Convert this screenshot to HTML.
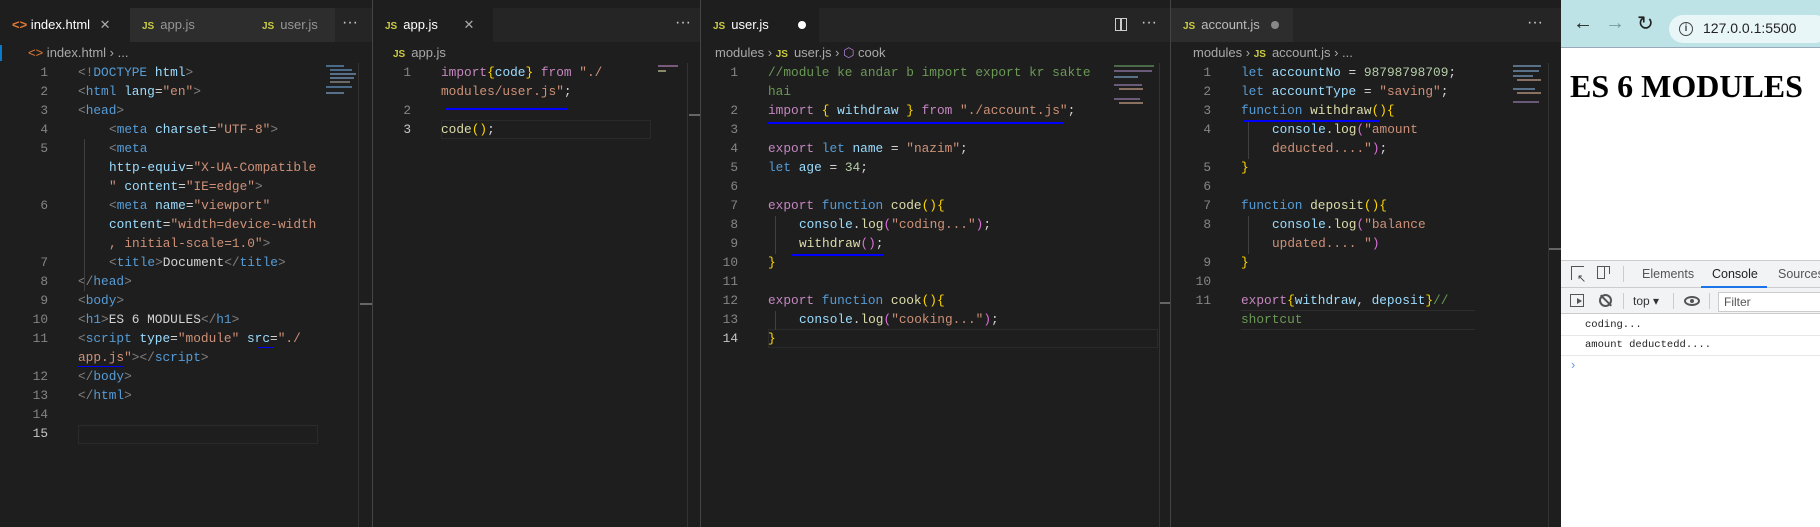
<!DOCTYPE html>
<html><head><meta charset="utf-8"><style>
*{margin:0;padding:0;box-sizing:border-box}
body{width:1820px;height:527px;background:#1e1e1e;position:relative;overflow:hidden;font-family:"Liberation Sans",sans-serif}
.abs{position:absolute}
.pane{position:absolute;top:0;height:527px;background:#1e1e1e;border-left:1px solid #444;overflow:hidden}
.tabs{position:absolute;left:0;right:0;top:8px;height:34px;background:#252526}
.tab{position:absolute;top:0;height:34px;background:#2d2d2d;color:#969696;font-size:13px;line-height:34px;padding-left:12px;white-space:nowrap}
.tab.act{background:#1e1e1e;color:#fff}
.js{color:#cbcb41;font-weight:bold;font-size:10px;margin-right:6px}
.crumb{position:absolute;top:43px;height:20px;color:#a9a9a9;font-size:13px;line-height:20px;white-space:nowrap}
.code{position:absolute;top:63px;font-family:"Liberation Mono",monospace;font-size:12.8px;line-height:19px;color:#d4d4d4}
.row{height:19px;position:relative}
.n{position:absolute;text-align:right;width:30px;color:#858585}
.c{position:absolute;white-space:pre}
.t{color:#808080}.tg{color:#569cd6}.at{color:#9cdcfe}.s{color:#ce9178}.k{color:#c586c0}.f{color:#dcdcaa}.b{color:#ffd700}.cm{color:#6a9955}.nu{color:#b5cea8}.p{color:#da70d6}
.ul{position:absolute;height:2px;background:#0000ff}
.mm{position:absolute;height:2px}
.dots{position:absolute;top:8px;height:34px;line-height:30px;color:#ccc;font-size:16px}
</style></head><body>
<div class="abs" style="left:0;top:0;width:1561px;height:8px;background:#333"></div>

<!-- PANE 1 -->
<div class="pane" style="left:0;width:373px;border-left:none">
 <div class="tabs">
  <div class="tab act" style="left:0;width:130px"><span style="color:#e37933;font-weight:bold">&lt;&gt;</span> index.html <span style="color:#aaa;margin-left:6px">✕</span></div>
  <div class="tab" style="left:130px;width:120px"><span class="js">JS</span>app.js</div>
  <div class="tab" style="left:250px;width:85px"><span class="js">JS</span>user.js</div>
 </div>
 <div class="dots" style="left:342px">···</div>
 <div class="crumb" style="left:28px"><span style="color:#e37933">&lt;&gt;</span> index.html › ...</div>
 <div class="abs" style="left:0;top:45px;width:2px;height:16px;background:#0a7acc"></div>
 <div class="abs" style="left:78px;top:425px;width:240px;height:19px;border:1px solid #2a2a2a"></div>
 <div class="code" style="left:18px"><div class="row"><span class="n">1</span><span class="c" style="left:60px"><span class="t">&lt;!</span><span class="tg">DOCTYPE</span> <span class="at">html</span><span class="t">&gt;</span></span></div><div class="row"><span class="n">2</span><span class="c" style="left:60px"><span class="t">&lt;</span><span class="tg">html</span> <span class="at">lang</span>=<span class="s">"en"</span><span class="t">&gt;</span></span></div><div class="row"><span class="n">3</span><span class="c" style="left:60px"><span class="t">&lt;</span><span class="tg">head</span><span class="t">&gt;</span></span></div><div class="row"><span class="n">4</span><span class="c" style="left:91px"><span class="t">&lt;</span><span class="tg">meta</span> <span class="at">charset</span>=<span class="s">"UTF-8"</span><span class="t">&gt;</span></span></div><div class="row"><span class="n">5</span><span class="c" style="left:91px"><span class="t">&lt;</span><span class="tg">meta</span></span></div><div class="row"><span class="c" style="left:91px"><span class="at">http-equiv</span>=<span class="s">"X-UA-Compatible</span></span></div><div class="row"><span class="c" style="left:91px"><span class="s">"</span> <span class="at">content</span>=<span class="s">"IE=edge"</span><span class="t">&gt;</span></span></div><div class="row"><span class="n">6</span><span class="c" style="left:91px"><span class="t">&lt;</span><span class="tg">meta</span> <span class="at">name</span>=<span class="s">"viewport"</span></span></div><div class="row"><span class="c" style="left:91px"><span class="at">content</span>=<span class="s">"width=device-width</span></span></div><div class="row"><span class="c" style="left:91px"><span class="s">, initial-scale=1.0"</span><span class="t">&gt;</span></span></div><div class="row"><span class="n">7</span><span class="c" style="left:91px"><span class="t">&lt;</span><span class="tg">title</span><span class="t">&gt;</span>Document<span class="t">&lt;/</span><span class="tg">title</span><span class="t">&gt;</span></span></div><div class="row"><span class="n">8</span><span class="c" style="left:60px"><span class="t">&lt;/</span><span class="tg">head</span><span class="t">&gt;</span></span></div><div class="row"><span class="n">9</span><span class="c" style="left:60px"><span class="t">&lt;</span><span class="tg">body</span><span class="t">&gt;</span></span></div><div class="row"><span class="n">10</span><span class="c" style="left:60px"><span class="t">&lt;</span><span class="tg">h1</span><span class="t">&gt;</span>ES 6 MODULES<span class="t">&lt;/</span><span class="tg">h1</span><span class="t">&gt;</span></span></div><div class="row"><span class="n">11</span><span class="c" style="left:60px"><span class="t">&lt;</span><span class="tg">script</span> <span class="at">type</span>=<span class="s">"module"</span> <span class="at">src</span>=<span class="s">"./</span></span></div><div class="row"><span class="c" style="left:60px"><span class="s">app.js"</span><span class="t">&gt;&lt;/</span><span class="tg">script</span><span class="t">&gt;</span></span></div><div class="row"><span class="n">12</span><span class="c" style="left:60px"><span class="t">&lt;/</span><span class="tg">body</span><span class="t">&gt;</span></span></div><div class="row"><span class="n">13</span><span class="c" style="left:60px"><span class="t">&lt;/</span><span class="tg">html</span><span class="t">&gt;</span></span></div><div class="row"><span class="n">14</span></div><div class="row"><span class="n" style="color:#c6c6c6">15</span></div></div>
 <div class="abs" style="left:84px;top:139px;width:1px;height:152px;background:#404040"></div>
 <div class="ul" style="left:258px;top:347px;width:16px;height:1px"></div>
 <div class="ul" style="left:78px;top:366px;width:46px;height:1px"></div>
 <div class="mm" style="left:326px;top:65px;width:18px;background:#4a6a8a"></div>
 <div class="mm" style="left:330px;top:69px;width:22px;background:#4a6a8a"></div>
 <div class="mm" style="left:330px;top:73px;width:26px;background:#587088"></div>
 <div class="mm" style="left:330px;top:77px;width:24px;background:#587088"></div>
 <div class="mm" style="left:330px;top:81px;width:20px;background:#6a6a6a"></div>
 <div class="mm" style="left:326px;top:86px;width:26px;background:#4a6a8a"></div>
 <div class="mm" style="left:326px;top:92px;width:18px;background:#587088"></div>
 <div class="abs" style="left:358px;top:63px;width:1px;height:464px;background:#333"></div>
 <div class="abs" style="left:360px;top:303px;width:12px;height:2px;background:#666"></div>
</div>

<!-- PANE 2 -->
<div class="pane" style="left:372px;width:329px">
 <div class="tabs">
  <div class="tab act" style="left:0;width:120px"><span class="js">JS</span>app.js <span style="color:#aaa;margin-left:22px">✕</span></div>
 </div>
 <div class="dots" style="left:302px">···</div>
 <div class="crumb" style="left:20px"><span class="js">JS</span>app.js</div>
 <div class="abs" style="left:68px;top:120px;width:210px;height:19px;border:1px solid #2a2a2a"></div>
 <div class="code" style="left:8px"><div class="row"><span class="n">1</span><span class="c" style="left:60px"><span class="k">import</span><span class="b">{</span><span class="at">code</span><span class="b">}</span> <span class="k">from</span> <span class="s">"./</span></span></div><div class="row"><span class="c" style="left:60px"><span class="s">modules/user.js"</span>;</span></div><div class="row"><span class="n">2</span></div><div class="row"><span class="n" style="color:#c6c6c6">3</span><span class="c" style="left:60px"><span class="f">code</span><span class="b">()</span>;</span></div></div>
 <div class="ul" style="left:73px;top:108px;width:122px"></div>
 <div class="mm" style="left:285px;top:65px;width:20px;background:#7a5a7a"></div>
 <div class="mm" style="left:285px;top:70px;width:8px;background:#8a8a6a"></div>
 <div class="abs" style="left:314px;top:63px;width:1px;height:464px;background:#333"></div>
 <div class="abs" style="left:316px;top:114px;width:13px;height:2px;background:#666"></div>
</div>

<!-- PANE 3 -->
<div class="pane" style="left:700px;width:471px">
 <div class="tabs">
  <div class="tab act" style="left:0;width:118px"><span class="js">JS</span>user.js <span style="display:inline-block;width:8px;height:8px;border-radius:50%;background:#fff;margin-left:26px"></span></div>
 </div>
 <div class="abs" style="left:414px;top:18px;width:12px;height:13px;border:1.5px solid #ccc"></div>
 <div class="abs" style="left:419px;top:18px;width:1.5px;height:13px;background:#ccc"></div>
 <div class="dots" style="left:440px">···</div>
 <div class="crumb" style="left:14px">modules › <span class="js">JS</span>user.js › <span style="color:#b180d7">⬡</span> cook</div>
 <div class="abs" style="left:67px;top:329px;width:390px;height:19px;border:1px solid #2a2a2a"></div>
 <div class="code" style="left:7px"><div class="row"><span class="n">1</span><span class="c" style="left:60px"><span class="cm">//module ke andar b import export kr sakte</span></span></div><div class="row"><span class="c" style="left:60px"><span class="cm">hai</span></span></div><div class="row"><span class="n">2</span><span class="c" style="left:60px"><span class="k">import</span> <span class="b">{</span> <span class="at">withdraw</span> <span class="b">}</span> <span class="k">from</span> <span class="s">"./account.js"</span>;</span></div><div class="row"><span class="n">3</span></div><div class="row"><span class="n">4</span><span class="c" style="left:60px"><span class="k">export</span> <span class="tg">let</span> <span class="at">name</span> = <span class="s">"nazim"</span>;</span></div><div class="row"><span class="n">5</span><span class="c" style="left:60px"><span class="tg">let</span> <span class="at">age</span> = <span class="nu">34</span>;</span></div><div class="row"><span class="n">6</span></div><div class="row"><span class="n">7</span><span class="c" style="left:60px"><span class="k">export</span> <span class="tg">function</span> <span class="f">code</span><span class="b">(){</span></span></div><div class="row"><span class="n">8</span><span class="c" style="left:91px"><span class="at">console</span>.<span class="f">log</span><span class="p">(</span><span class="s">"coding..."</span><span class="p">)</span>;</span></div><div class="row"><span class="n">9</span><span class="c" style="left:91px"><span class="f">withdraw</span><span class="p">()</span>;</span></div><div class="row"><span class="n">10</span><span class="c" style="left:60px"><span class="b">}</span></span></div><div class="row"><span class="n">11</span></div><div class="row"><span class="n">12</span><span class="c" style="left:60px"><span class="k">export</span> <span class="tg">function</span> <span class="f">cook</span><span class="b">(){</span></span></div><div class="row"><span class="n">13</span><span class="c" style="left:91px"><span class="at">console</span>.<span class="f">log</span><span class="p">(</span><span class="s">"cooking..."</span><span class="p">)</span>;</span></div><div class="row"><span class="n" style="color:#c6c6c6">14</span><span class="c" style="left:60px"><span class="b">}</span></span></div></div>
 <div class="abs" style="left:74px;top:216px;width:1px;height:38px;background:#404040"></div>
 <div class="abs" style="left:74px;top:311px;width:1px;height:19px;background:#404040"></div>
 <div class="ul" style="left:66px;top:122px;width:296px"></div>
 <div class="ul" style="left:91px;top:254px;width:92px"></div>
 <div class="mm" style="left:413px;top:65px;width:40px;background:#4a6a4a"></div>
 <div class="mm" style="left:413px;top:70px;width:38px;background:#6a5a7a"></div>
 <div class="mm" style="left:413px;top:76px;width:24px;background:#587088"></div>
 <div class="mm" style="left:413px;top:84px;width:28px;background:#6a5a7a"></div>
 <div class="mm" style="left:418px;top:88px;width:24px;background:#8a7060"></div>
 <div class="mm" style="left:413px;top:98px;width:26px;background:#6a5a7a"></div>
 <div class="mm" style="left:418px;top:102px;width:24px;background:#8a7060"></div>
 <div class="abs" style="left:458px;top:63px;width:1px;height:464px;background:#333"></div>
 <div class="abs" style="left:459px;top:302px;width:12px;height:2px;background:#666"></div>
</div>

<!-- PANE 4 -->
<div class="pane" style="left:1170px;width:391px">
 <div class="tabs">
  <div class="tab" style="left:0;width:122px;color:#bbb"><span class="js">JS</span>account.js <span style="display:inline-block;width:8px;height:8px;border-radius:50%;background:#888;margin-left:8px"></span></div>
 </div>
 <div class="dots" style="left:356px">···</div>
 <div class="crumb" style="left:22px">modules › <span class="js">JS</span>account.js › ...</div>
 <div class="abs" style="left:70px;top:310px;width:234px;height:20px;border-top:1px solid #2e2e2e;border-bottom:1px solid #2e2e2e"></div>
 <div class="code" style="left:10px"><div class="row"><span class="n">1</span><span class="c" style="left:60px"><span class="tg">let</span> <span class="at">accountNo</span> = <span class="nu">98798798709</span>;</span></div><div class="row"><span class="n">2</span><span class="c" style="left:60px"><span class="tg">let</span> <span class="at">accountType</span> = <span class="s">"saving"</span>;</span></div><div class="row"><span class="n">3</span><span class="c" style="left:60px"><span class="tg">function</span> <span class="f">withdraw</span><span class="b">(){</span></span></div><div class="row"><span class="n">4</span><span class="c" style="left:91px"><span class="at">console</span>.<span class="f">log</span><span class="p">(</span><span class="s">"amount</span></span></div><div class="row"><span class="c" style="left:91px"><span class="s">deducted...."</span><span class="p">)</span>;</span></div><div class="row"><span class="n">5</span><span class="c" style="left:60px"><span class="b">}</span></span></div><div class="row"><span class="n">6</span></div><div class="row"><span class="n">7</span><span class="c" style="left:60px"><span class="tg">function</span> <span class="f">deposit</span><span class="b">(){</span></span></div><div class="row"><span class="n">8</span><span class="c" style="left:91px"><span class="at">console</span>.<span class="f">log</span><span class="p">(</span><span class="s">"balance</span></span></div><div class="row"><span class="c" style="left:91px"><span class="s">updated.... "</span><span class="p">)</span></span></div><div class="row"><span class="n">9</span><span class="c" style="left:60px"><span class="b">}</span></span></div><div class="row"><span class="n">10</span></div><div class="row"><span class="n">11</span><span class="c" style="left:60px"><span class="k">export</span><span class="b">{</span><span class="at">withdraw</span>, <span class="at">deposit</span><span class="b">}</span><span class="cm">//</span></span></div><div class="row"><span class="c" style="left:60px"><span class="cm">shortcut</span></span></div></div>
 <div class="abs" style="left:77px;top:121px;width:1px;height:38px;background:#404040"></div>
 <div class="abs" style="left:77px;top:216px;width:1px;height:38px;background:#404040"></div>
 <div class="ul" style="left:72px;top:120px;width:136px"></div>
 <div class="mm" style="left:342px;top:65px;width:28px;background:#587088"></div>
 <div class="mm" style="left:342px;top:70px;width:26px;background:#587088"></div>
 <div class="mm" style="left:342px;top:75px;width:20px;background:#587088"></div>
 <div class="mm" style="left:346px;top:79px;width:24px;background:#8a7060"></div>
 <div class="mm" style="left:342px;top:88px;width:22px;background:#587088"></div>
 <div class="mm" style="left:346px;top:92px;width:24px;background:#8a7060"></div>
 <div class="mm" style="left:342px;top:101px;width:26px;background:#6a5a7a"></div>
 <div class="abs" style="left:377px;top:63px;width:1px;height:464px;background:#333"></div>
 <div class="abs" style="left:378px;top:248px;width:13px;height:2px;background:#666"></div>
</div>

<!-- BROWSER -->
<div class="abs" style="left:1561px;top:0;width:259px;height:527px;background:#fff;font-family:'Liberation Sans',sans-serif">
 <div class="abs" style="left:0;top:0;width:259px;height:48px;background:#bde3e6;border-bottom:1px solid #9ab"></div>
 <div class="abs" style="left:12px;top:12px;font-size:20px;color:#222">←</div>
 <div class="abs" style="left:44px;top:12px;font-size:20px;color:#7a9a9c">→</div>
 <div class="abs" style="left:76px;top:11px;font-size:20px;color:#222">↻</div>
 <div class="abs" style="left:108px;top:15px;width:160px;height:28px;border-radius:14px;background:#e9f6f7"></div>
 <div class="abs" style="left:118px;top:22px;width:14px;height:14px;border:1.5px solid #444;border-radius:50%;font-size:10px;line-height:11px;text-align:center;color:#444;font-weight:bold">i</div>
 <div class="abs" style="left:142px;top:20px;font-size:14px;color:#222">127.0.0.1:5500</div>
 <div class="abs" style="left:9px;top:68px;font-family:'Liberation Serif',serif;font-weight:bold;font-size:32px;color:#000;white-space:nowrap">ES 6 MODULES</div>
 <div class="abs" style="left:0;top:260px;width:259px;height:28px;background:#f1f3f4;border-top:1px solid #ccc;border-bottom:1px solid #ccc"></div>
 <div class="abs" style="left:10px;top:266px;width:13px;height:14px;border:1.5px solid #555;border-right:none;border-bottom:none"></div>
 <div class="abs" style="left:16px;top:272px;font-size:11px;color:#444">↖</div>
 <div class="abs" style="left:36px;top:266px;width:8px;height:13px;border:1.5px solid #555"></div>
 <div class="abs" style="left:41px;top:266px;width:8px;height:8px;border:1.5px solid #555;border-bottom:none;border-left:none"></div>
 <div class="abs" style="left:62px;top:266px;width:1px;height:16px;background:#ccc"></div>
 <div class="abs" style="left:81px;top:267px;font-size:12.5px;color:#555">Elements</div>
 <div class="abs" style="left:151px;top:267px;font-size:12.5px;color:#222">Console</div>
 <div class="abs" style="left:140px;top:286px;width:66px;height:2px;background:#1a73e8"></div>
 <div class="abs" style="left:217px;top:267px;font-size:12.5px;color:#555">Sources</div>
 <div class="abs" style="left:0;top:288px;width:259px;height:26px;background:#f1f3f4;border-bottom:1px solid #ccc"></div>
 <div class="abs" style="left:9px;top:294px;width:14px;height:13px;border:1.5px solid #555"></div>
 <div class="abs" style="left:16px;top:298px;width:0;height:0;border-left:5px solid #555;border-top:3px solid transparent;border-bottom:3px solid transparent"></div>
 <div class="abs" style="left:38px;top:294px;width:13px;height:13px;border:2px solid #555;border-radius:50%"></div>
 <div class="abs" style="left:44px;top:293px;width:2px;height:15px;background:#555;transform:rotate(-45deg)"></div>
 <div class="abs" style="left:62px;top:293px;width:1px;height:16px;background:#ccc"></div>
 <div class="abs" style="left:72px;top:294px;font-size:12px;color:#333">top ▾</div>
 <div class="abs" style="left:112px;top:293px;width:1px;height:16px;background:#ccc"></div>
 <div class="abs" style="left:123px;top:296px;width:16px;height:10px;border:2px solid #555;border-radius:50%"></div>
 <div class="abs" style="left:129px;top:299px;width:4px;height:4px;background:#555;border-radius:50%"></div>
 <div class="abs" style="left:148px;top:293px;width:1px;height:16px;background:#ccc"></div>
 <div class="abs" style="left:157px;top:292px;width:110px;height:20px;background:#fff;border:1px solid #ccc;font-size:12px;line-height:18px;padding-left:5px;color:#555">Filter</div>
 <div class="abs" style="left:24px;top:319px;font-family:'Liberation Mono',monospace;font-size:10.5px;color:#222">coding...</div>
 <div class="abs" style="left:0;top:335px;width:259px;height:1px;background:#e8e8e8"></div>
 <div class="abs" style="left:24px;top:339px;font-family:'Liberation Mono',monospace;font-size:10.5px;color:#222">amount deductedd....</div>
 <div class="abs" style="left:0;top:355px;width:259px;height:1px;background:#e8e8e8"></div>
 <div class="abs" style="left:10px;top:357px;font-size:13px;color:#6a9ae8">›</div>
</div>
</body></html>
